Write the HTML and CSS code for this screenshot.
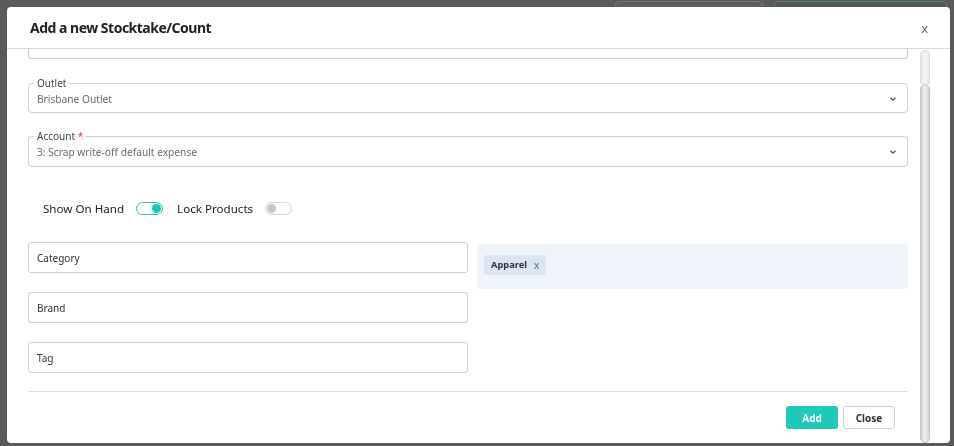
FILE: index.html
```html
<!DOCTYPE html>
<html lang="en">
<head>
<meta charset="utf-8">
<title>Add a new Stocktake/Count</title>
<link rel="stylesheet" href="styles.css">
</head>
<body>
<div class="page">
  <div class="toolbar">
    <span class="tb-btn tb-grey"></span>
    <span class="tb-btn tb-teal"></span>
  </div>
</div>
<div class="modal">
  <div class="modal-header">
    <h2 class="modal-title">Add a new Stocktake/Count</h2>
    <span class="modal-x">x</span>
  </div>
  <div class="modal-body">
    <div class="content">
      <div class="input cut-input"></div>

      <fieldset class="select-field">
        <legend>Outlet</legend>
        <div class="select-row">
          <span class="select-value">Brisbane Outlet</span>
          <svg class="chev" width="8" height="6" viewBox="0 0 8 6"><path d="M1.5 1.8 L4 4.2 L6.5 1.8" fill="none" stroke="#555" stroke-width="1.3"/></svg>
        </div>
      </fieldset>

      <fieldset class="select-field account">
        <legend>Account <span class="req">*</span></legend>
        <div class="select-row">
          <span class="select-value">3: Scrap write-off default expense</span>
          <svg class="chev" width="8" height="6" viewBox="0 0 8 6"><path d="M1.5 1.8 L4 4.2 L6.5 1.8" fill="none" stroke="#555" stroke-width="1.3"/></svg>
        </div>
      </fieldset>

      <div class="toggles">
        <span class="toggle-label">Show On Hand</span>
        <span class="switch on"><span class="knob"></span></span>
        <span class="toggle-label">Lock Products</span>
        <span class="switch off"><span class="knob"></span></span>
      </div>

      <div class="filters">
        <div class="filter-col">
          <div class="input">Category</div>
          <div class="input">Brand</div>
          <div class="input">Tag</div>
        </div>
        <div class="chip-panel">
          <span class="chip"><span class="chip-text">Apparel</span><span class="chip-x">x</span></span>
        </div>
      </div>

      <div class="footer">
        <button class="btn btn-add">Add</button>
        <button class="btn btn-close">Close</button>
      </div>
    </div>
    <div class="scrollbar"><div class="scroll-top"></div><div class="scroll-thumb"></div></div>
  </div>
</div>
</body>
</html>
```

FILE: styles.css
```css
* { box-sizing: border-box; }
html, body { margin: 0; padding: 0; }
body {
  width: 954px;
  height: 446px;
  background: #5a5a5a;
  font-family: "Noto Sans", "Liberation Sans", sans-serif;
  overflow: hidden;
}
.page { height: 446px; }
.toolbar {
  display: flex;
  justify-content: flex-end;
  gap: 11px;
  padding: 1px 7px 0 0;
}
.tb-btn {
  display: block;
  height: 30px;
  border-radius: 4px;
}
.tb-grey { width: 148px; background: #5e5e5e; border: 1px solid #737373; }
.tb-teal { width: 173px; background: #4d5a58; border: 1px solid #6b7775; }

.modal {
  position: fixed;
  left: 7px;
  top: 7px;
  width: 943px;
  height: 436px;
  background: #fff;
  border-radius: 4px;
  display: flex;
  flex-direction: column;
  overflow: hidden;
}
.modal-header {
  height: 42px;
  flex: none;
  border-bottom: 1px solid #d9d9dc;
  display: flex;
  align-items: center;
  justify-content: space-between;
  padding: 0 22px 0 23px;
}
.modal-title {
  margin: 0;
  font-size: 14px;
  font-weight: 700;
  color: #222;
  letter-spacing: -0.5px;
}
.modal-x {
  font-size: 13px;
  color: #666;
  font-family: "Liberation Sans", sans-serif;
  margin-top: 1px;
}
.modal-body {
  flex: 1;
  position: relative;
  overflow: hidden;
}
.content {
  width: 901px;
  padding-left: 21px;
}
.input {
  height: 31px;
  border: 1px solid #cfcfd3;
  border-radius: 3px;
  display: flex;
  align-items: center;
  padding-left: 8px;
  font-size: 10px;
  color: #333;
}
.cut-input { margin-top: -21px; }

.select-field {
  margin: 18px 0 0 0;
  padding: 0 10px 0 8px;
  border: 1px solid #cfcfd3;
  border-radius: 4px;
  min-width: 0;
  height: 36px;
}
.select-field.account { margin-top: 17px; height: 37px; }
.select-field legend {
  display: block;
  height: 12px;
  font-size: 10px;
  line-height: 12px;
  color: #444;
  padding: 0 3px;
  margin-left: -3px;
}
.req { color: #e03a3a; }
.select-row {
  height: 20px;
  display: flex;
  align-items: center;
  justify-content: space-between;
}
.select-value {
  font-size: 10.2px;
  color: #6b6b70;
}
.chev { display: block; }

.toggles {
  margin-top: 31px;
  height: 20px;
  display: flex;
  align-items: center;
  padding-left: 15px;
}
.toggle-label {
  font-size: 11.6px;
  color: #222;
}
.switch {
  position: relative;
  width: 27px;
  height: 13px;
  border-radius: 7px;
  border: 1px solid #d6d6dc;
  background: #fff;
  margin: 0 14px 0 12px;
}
.switch.on { border-color: #1ec8b6; }
.knob {
  position: absolute;
  top: 1px;
  width: 9px;
  height: 9px;
  border-radius: 50%;
}
.switch.on .knob { right: 1px; background: #1ec8b6; }
.switch.off .knob { left: 1px; background: #c4c4d2; }

.filters {
  margin-top: 24px;
  display: grid;
  grid-template-columns: 440px 1fr;
  gap: 9px;
  align-items: start;
}
.filter-col {
  display: flex;
  flex-direction: column;
  gap: 19px;
}
.chip-panel {
  margin-top: 2px;
  height: 45px;
  background: #eff4fb;
  border-radius: 3px;
  padding: 7px;
}
.chip {
  display: inline-flex;
  align-items: center;
  height: 20px;
  padding: 0 7px;
  background: #dbe6f4;
  border-radius: 3px;
}
.chip-text {
  font-size: 9.3px;
  font-weight: 700;
  color: #333;
}
.chip-x {
  font-size: 10px;
  color: #666;
  margin-left: 7px;
}

.footer {
  margin-top: 18px;
  border-top: 1px solid #dcdce0;
  display: flex;
  justify-content: flex-end;
  gap: 5px;
  padding: 14px 13px 0 0;
}
.btn {
  width: 52px;
  height: 23px;
  border-radius: 3px;
  font-family: inherit;
  font-size: 10px;
  font-weight: 700;
  padding: 0;
  cursor: pointer;
}
.btn-add { background: #1ec9b7; color: #fff; border: none; }
.btn-close { background: #fff; color: #333; border: 1px solid #cfcfd3; }

.scrollbar {
  position: absolute;
  left: 913px;
  top: 1px;
  width: 10px;
  bottom: 0;
  display: flex;
  flex-direction: column;
}
.scroll-top {
  height: 34px;
  border-radius: 5px 5px 0 0;
  background: linear-gradient(to right, #e6e6e6, #f7f7f7, #e6e6e6);
  border: 1px solid #dedede;
  border-bottom: none;
}
.scroll-thumb {
  flex: 1;
  border-radius: 5px;
  background: linear-gradient(to right, #cfcfcf, #efefef 45%, #d4d4d4);
  border: 1px solid #c4c4c4;
}
```
